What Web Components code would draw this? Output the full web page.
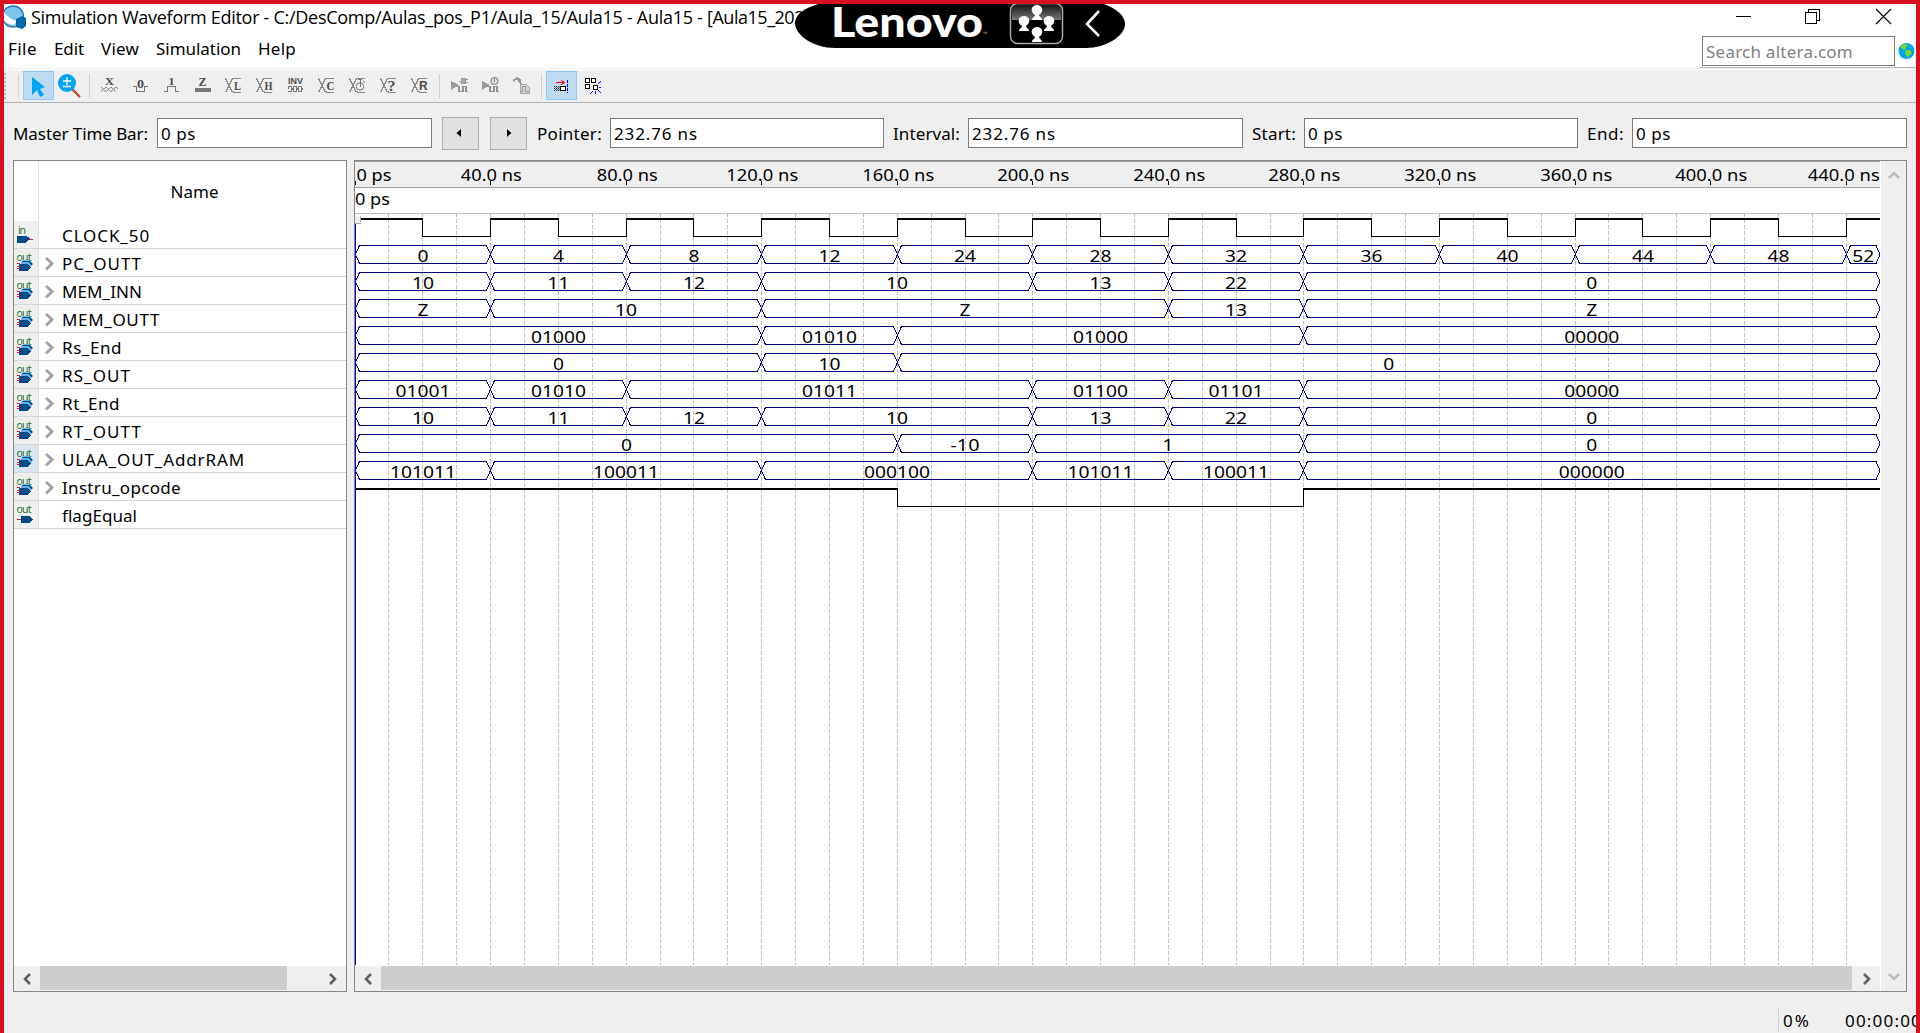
<!DOCTYPE html>
<html lang="en"><head><meta charset="utf-8"><title>Simulation Waveform Editor</title>
<style>html,body{margin:0;height:100%;overflow:hidden;background:#efefef}body{font:17px "Noto Sans","Open Sans",sans-serif;color:#000}</style>
</head><body><app-window></app-window>
<script>
const define=(name,html,setup)=>customElements.define(name,class extends HTMLElement{
  connectedCallback(){if(this.shadowRoot)return;const r=this.attachShadow({mode:'open'});
    r.innerHTML=typeof html==='function'?html(this):html;if(setup)setup(this,r)}});

// Text run tracked out to an exact advance width.
define('fit-text','<style>:host{display:block;white-space:pre;flex:none}span{display:inline-block}</style><span><slot></slot></span>',(el,r)=>{
  const w=+el.getAttribute('w'),s=r.querySelector('span'),n=el.textContent.length;
  const nat=s.getBoundingClientRect().width;
  s.style.letterSpacing=((w-nat)/n)+'px';el.style.width=w+'px';});

define('title-bar',`<style>
:host{display:flex;height:28px;background:#fff;flex:none;font-family:"Open Sans","Noto Sans",sans-serif;font-size:18px;line-height:27px}
svg{flex:none;display:block}.logo{margin:1px 4px 0 0}.grow{flex:1}</style>
<svg class="logo" width="23" height="24" viewBox="0 0 23 24"><circle cx="9" cy="11.5" r="10.500" fill="#7cc6ee" stroke="#2474ae" stroke-width="1.300"/><path d="M-1 6C3 12 8 15 13 16L10 20C4 20 0 17-1 13Z" fill="#fff"/><path d="M12 14l6-3 4 2v8l-4 3-6-2z" fill="#0068a9"/></svg>
<fit-text w="676">Simulation Waveform Editor - C:/DesComp/Aulas_pos_P1/Aula_15/Aula15 - Aula15 - </fit-text><fit-text w="97">[Aula15_202</fit-text><span class="grow"></span>
<svg width="180" height="28" viewBox="1736 4 180 28" fill="none" stroke="#000" shape-rendering="crispEdges"><path d="M1736 16.5h15M1805.5 12.5h11v11h-11zM1808.5 12V9.5h11v11H1817"/><path d="M1876 9l15 15M1891 9l-15 15" shape-rendering="auto" stroke-width="1.1"/></svg>`);

define('menu-bar',`<style>
:host{display:flex;height:36px;background:#fff;flex:none;line-height:34px;border-bottom:1px solid #eee;padding-left:4px}
.items{display:flex;gap:17px}.grow{flex:1}.side{display:flex;width:216px;border-bottom:1px solid #b9b9b9;height:35px;align-items:flex-start}
.box{box-sizing:border-box;width:193px;height:30px;margin:4px 3px 0 2px;border:1px solid #7a7a7a;padding-left:3px;line-height:30px;color:#808080}svg{margin-top:10px}</style>
<div class="items"><fit-text w="29">File</fit-text><fit-text w="30">Edit</fit-text><fit-text w="38">View</fit-text><fit-text w="85">Simulation</fit-text><fit-text w="38">Help</fit-text></div><span class="grow"></span>
<div class="side"><div class="box"><fit-text w="147">Search altera.com</fit-text></div>
<svg width="17" height="18" viewBox="0 0 17 18"><circle cx="8.5" cy="9" r="8" fill="#00a4f4"/><path d="M3 3l4-1 3 1-2 2 0 2-2 1-3-2zM8 8l4 0 2 3-3 3-1 2-2-3-1-2z" fill="#7dd421"/></svg></div>`);

const glyph=(x,y,s,c,w=10)=>`<text x="${x-w/2}" y="${y}" font-family="Liberation Serif" font-size="${s}" font-weight="700" fill="#4c4c4c" textLength="${w}" lengthAdjust="spacingAndGlyphs">${c}</text>`;
const cut='<path d="M.5 1.500L7.500 15.500M7.500 1.500L.5 15.500M7 3l2-1.500h7M7 14l2 1.500h7" fill="none" stroke="#8a8a8a"/>';
const wave='<path d="M5 9.500h3v5h4v-5h3v5h3" fill="none" stroke="#929292" stroke-width="1.700"/>';
const icons={
 x:'<path d="M0 10.500l5 5 5-5 5 5M0 15.500l5-5 5 5 5-5 2 2" transform="scale(1 .95)" fill="none" stroke="#858585"/>'+glyph(8.5,8,10,'X',9),
 zero:'<path d="M1 9.500h3.500v5h8v-5H16" fill="none" stroke="#777"/>'+glyph(8.5,11,12,'0',7),
 one:'<path d="M1 14.500h3.500v-5h8v5H16" fill="none" stroke="#777"/>'+glyph(8.5,8,10,'1',6),
 z:'<path d="M1 11h16v4H1z" fill="#777"/>'+glyph(8.5,9,12,'Z',8),
 l:cut+glyph(12.5,13,12,'L',7), h:cut+glyph(12.5,13,12,'H',8),
 inv:'<text x="1" y="7" font-family="Liberation Sans" font-size="8.500" font-weight="700" fill="#4c4c4c" textLength="15" lengthAdjust="spacingAndGlyphs">INV</text><path d="M1 11.500V9.500h3v2h2v-2h3v2h2v-2h3v2h2M1 14.500h3v-2h2v2h3v-2h2v2h3v-2h2" fill="none" stroke="#777"/>',
 c:cut+glyph(12.5,13,12,'C',8),
 clock:cut+'<circle cx="11" cy="9.500" r="3.700" fill="#efefef" stroke="#777" shape-rendering="auto"/><path d="M9 2.500h4M11 3v7M14 4l2 2" fill="none" stroke="#777"/>',
 q:cut+glyph(11.5,14,14,'?',8),
 r:cut+`<text x="8" y="13" font-family="Liberation Sans" font-size="12" font-weight="700" fill="#4c4c4c" textLength="9">R</text>`,
 run1:'<path d="M0 4l8 4-8 5z" fill="#999"/><path d="M8 4h2c0-4 5-4 5 0s-5 4-5 0M15 2.500h2M15 5.500h2" fill="#aaa" stroke="#999"/>'+wave,
 run2:'<path d="M0 4l8 4-8 5z" fill="#999"/><circle cx="12.500" cy="4" r="3.300" fill="#eee" stroke="#999" stroke-width="1.500" shape-rendering="auto"/><path d="M12.500 2v3" stroke="#777"/>'+wave,
 hammer:'<path d="M0 4l4-3 4 2M5 2l5 8" fill="none" stroke="#999" stroke-width="2"/><path d="M7 7h6l3 3v6H7z" fill="#d5d5d5" stroke="#aaa"/><path d="M7 14h2V9h3v5h4" fill="none" stroke="#999"/>',
 snap:'<path d="M3 5.500h8M8 3l3 2.500L8 8" fill="none" stroke="#f00"/><path d="M1 9.500h7M1 13.500h7M1 11.500h7" stroke="#222" stroke-dasharray="1 1"/><path d="M1 10.500h7M1 12.500h7" stroke="#555" stroke-dasharray="1 1" stroke-dashoffset="1"/><path d="M7.500 9.500h5v4h-5z" fill="#fff" stroke="#000"/><path d="M14.500 3v13" stroke="#00f" stroke-dasharray="3 1"/>',
 grid:'<path d="M1.500 1.500h4v4h-4zM7.500 1.500h4v4h-4zM1.500 7.500h4v4h-4zM9.500 8.500h4v4h-4z" fill="#fff" stroke="#000"/><path d="M14 7l3-3M15 10.500h2M14 13l3 3M11.500 14v3M9 14l-3 3" stroke="#00f"/>'};
define('tool-icon',el=>`<style>:host{display:flex;box-sizing:border-box;width:31px;height:29px;align-items:center;justify-content:center;flex:none}
:host([on]){background:#bfdbf2;border:1px solid #90c8f6}svg{display:block}</style><svg width="17" height="17" viewBox="0 0 17 17" shape-rendering="crispEdges">${icons[el.getAttribute('kind')]}</svg>`);
define('tool-bar',()=>`<style>:host{display:flex;flex:none;background:#efefef;border-top:1px solid #fff;border-bottom:1px solid #b3b3b3;box-sizing:border-box;height:34px}
i{display:block;width:1px;height:24px;background:#cfcfcf;margin-top:4px;flex:none}.grip{height:26px;width:2px;margin-top:3px;background:repeating-linear-gradient(#b8b8b8 0 2px,#efefef 2px 4px)}
.sel{display:flex;box-sizing:border-box;width:31px;height:29px;border:1px solid #90c8f6;background:#bfdbf2;margin:1px 4px 0}
svg{flex:none}tool-icon{margin-top:1px}</style>
<i class="grip"></i><i style="margin-left:12px"></i><div class="sel"><svg width="29" height="27" viewBox="24 72 29 27"><path d="M32 77L45 87L40 89L44 95L40 97L37 90L32 95Z" fill="#00a4f4"/></svg></div>
<svg width="26" height="31" viewBox="58 70 26 31"><path d="M72 89l8 8" stroke="#c43b18" stroke-width="2.200"/><circle cx="67" cy="83" r="9" fill="#00a4f4"/><path d="M67 77v8M63 81h8M63 86.500h8" stroke="#fff" stroke-width="1.300"/></svg>
<i style="margin:4px 4px 0 5px"></i>${['x','zero','one','z','l','h','inv','c','clock','q','r'].map(k=>`<tool-icon kind="${k}"></tool-icon>`).join('')}
<i style="margin:4px 4px 0 4px"></i>${['run1','run2','hammer'].map(k=>`<tool-icon kind="${k}"></tool-icon>`).join('')}<i style="margin:4px 4px 0 4px"></i><tool-icon on kind="snap"></tool-icon><tool-icon kind="grid"></tool-icon>`);

define('time-field',el=>`<style>:host{display:flex;align-items:center;flex:none}.box{box-sizing:border-box;height:30px;line-height:30px;border:1px solid #7a7a7a;background:#fff;padding-left:3px;width:${el.getAttribute('bw')}px}
.l{width:${el.getAttribute('lw')}px;line-height:29px;flex:none}</style><div class="l"><fit-text w="${el.getAttribute('tw')}">${el.getAttribute('label')}</fit-text></div><div class="box"><fit-text w="${el.getAttribute('vw')}">${el.getAttribute('value')}</fit-text></div>`);
define('step-button',el=>`<style>:host{display:flex;box-sizing:border-box;width:37px;height:33px;border:1px solid #adadad;background:#e1e1e1;align-items:center;justify-content:center;flex:none}</style>
<svg width="35" height="31" viewBox="0 0 35 31"><path d="${el.hasAttribute('next')?'M16 11l4.500 4L16 19z':'M18 11l-4.500 4L18 19z'}"/></svg>`);
define('time-bar',`<style>:host{display:flex;height:57px;flex:none;align-items:flex-start;padding:14px 0 0 9px;box-sizing:border-box}time-field{margin-top:1px}step-button{margin-left:10px}step-button+step-button{margin-left:11px}</style>
<time-field label="Master Time Bar:" lw="144" tw="135" bw="275" value="0 ps" vw="35"></time-field><step-button></step-button><step-button next></step-button>
<time-field style="margin-left:10px" label="Pointer:" lw="73" tw="65" bw="274" value="232.76 ns" vw="84"></time-field>
<time-field style="margin-left:9px" label="Interval:" lw="75" tw="67" bw="275" value="232.76 ns" vw="84"></time-field>
<time-field style="margin-left:9px" label="Start:" lw="52" tw="44" bw="274" value="0 ps" vw="35"></time-field>
<time-field style="margin-left:9px" label="End:" lw="45" tw="37" bw="275" value="0 ps" vw="35"></time-field>`);

const pinOut='<text x="-.500" y="7" font-size="10.500" textLength="15" fill="#2a7030">out</text>';
const pins={in:'<text x="1" y="8" font-size="10.500" fill="#2a7030" textLength="8">in</text><path d="M0 9.500h9l4 3-4 4H0z" fill="#004a87"/><path d="M12 13h4" stroke="#e8102e"/>',
 bus:pinOut+'<path d="M4 8l3-2h5l4 4-3 5-2-5H4z" fill="#5fb4ec"/><path d="M5 7.500h7l3 3" fill="none" stroke="#004a87"/><path d="M2 10h8l4 3-3 4H2z" fill="#004a87"/><path d="M0 9.500h3M0 12h3M0 14.500h3" stroke="#e8102e"/>',
 out:pinOut+'<path d="M4 10h8l4 3-4 4H4z" fill="#004a87"/><path d="M0 13.500h4" stroke="#e8102e"/>'};
define('signal-row',el=>`<style>:host{display:flex;height:28px;box-sizing:border-box;border-bottom:1px solid #d4d4d4;flex:none}.pin{background:#efefef;border-right:1px solid #ddd;padding:5px 0 0 3px;box-sizing:border-box;width:25px}:host([active]) .pin{background:#d9e5f0}
.ch{width:23px;padding:8px 0 0 6px;box-sizing:border-box}svg{display:block;overflow:visible}.n{line-height:29px}</style>
<div class="pin"><svg width="17" height="18" shape-rendering="crispEdges">${pins[el.getAttribute('pin')]}</svg></div><div class="ch">${el.getAttribute('pin')==='bus'?'<svg width="10" height="14"><path d="M1 1l6 5.500L1 12.500" fill="none" stroke="#a3a3a3" stroke-width="3"/></svg>':''}</div><div class="n"><slot></slot></div>`);
const chev=(d)=>`<svg width="12" height="12" viewBox="0 0 12 12"><path d="${{l:'M9 1L4 6l5 5',r:'M3 1l5 5-5 5',u:'M1 9l5-5 5 5',d:'M1 3l5 5 5-5'}[d]}" fill="none" stroke="${d==='u'||d==='d'?'#bdbdbd':'#606060'}" stroke-width="2.600"/></svg>`;
define('scroll-bar',el=>{const v=el.hasAttribute('vertical');return `<style>:host{display:flex;flex:none;background:#efefef;${v?'flex-direction:column;width:25px;justify-content:space-between;align-items:center;padding:8px 0':'height:25px'};box-sizing:border-box}
span{width:26px;height:25px;display:flex;align-items:center;justify-content:center;flex:none}b{width:${el.getAttribute('thumb')}px;height:24px;background:#cdcdcd}.g{flex:1}svg{display:block}</style>${v?chev('u')+chev('d'):`<span>${chev('l')}</span><b></b><div class="g"></div><span style="width:27px">${chev('r')}</span>`}`});
define('signal-list',()=>{const rows=[['CLOCK_50',88,'in'],['PC_OUTT',80],['MEM_INN',80],['MEM_OUTT',98],['Rs_End',60],['RS_OUT',69],['Rt_End',58],['RT_OUTT',80],['ULAA_OUT_AddrRAM',183],['Instru_opcode',119],['flagEqual',75,'out']];
return `<style>:host{display:flex;flex-direction:column;box-sizing:border-box;width:334px;border:1px solid #828790;background:#fff;flex:none}
.head{display:flex;height:60px;flex:none}.a{width:24px;border-right:1px solid #e6e6e6}.name{flex:1;display:flex;justify-content:center;line-height:61px;padding-left:4px}.g{flex:1}</style>
<div class="head"><div class="a"></div><div class="name"><fit-text w="48">Name</fit-text></div></div>
${rows.map(r=>`<signal-row pin="${r[2]||'bus'}"${r[0][0]==='U'?' active':''}><fit-text w="${r[1]}">${r[0]}</fit-text></signal-row>`).join('')}<div class="g"></div><scroll-bar thumb="247"></scroll-bar>`});

define('wave-view',()=>{
 const X=k=>Math.floor(355+33.89*k)+.5, END=1880;
 let s='<rect x="355" y="161" width="1525" height="26" fill="#efefef"/><path d="M355 161.500h1525M355 187.500h1525" stroke="#a0a0a0"/><path d="M355 213.500h1525" stroke="#bdbdbd"/>',t='';
 const text=(x,y,w,str,a='middle')=>t+=`<text x="${a==='middle'?x-w/2:x}" y="${y}" textLength="${w}" lengthAdjust="spacingAndGlyphs">${str}</text>`;
 for(let k=1;k<=44;k++)s+=`<path d="M${X(k)} 214V965" stroke="#bebebe" stroke-dasharray="4 2" stroke-dashoffset="1"/>`;
 for(let k=0;k<=44;k+=4)s+=`<path d="M${X(k)} 181v4" stroke="#000"/>`;
 text(356.5,181,35,'0 ps','start');text(355,205,35,'0 ps','start');
 for(let n=40;n<=440;n+=40){const w=n<100?61:72;text(n===440?1843.8:X(n/10)+.8,181,w,n+'.0 ns')}
 for(let k=0;k<=44;k+=4){const a=k?X(k):360,b=k<44?X(k+2):END;
  s+=`<path d="M${k?a-.5:a} 219H${b+(k<44?.5:0)}" stroke="#000" stroke-width="2"/>`;
  if(k<44)s+=`<path d="M${b} 218V236.500H${X(k+4)}V218" fill="none" stroke="#000"/>`;}
 const rows=[
  [[0,'0'],[4,'4'],[8,'8'],[12,'12'],[16,'24'],[20,'28'],[24,'32'],[28,'36'],[32,'40'],[36,'44'],[40,'48'],[44,'52']],
  [[0,'10'],[4,'11'],[8,'12'],[12,'10'],[20,'13'],[24,'22'],[28,'0']],
  [[0,'Z'],[4,'10'],[12,'Z'],[24,'13'],[28,'Z']],
  [[0,'01000'],[12,'01010'],[16,'01000'],[28,'00000']],
  [[0,'0'],[12,'10'],[16,'0']],
  [[0,'01001'],[4,'01010'],[8,'01011'],[20,'01100'],[24,'01101'],[28,'00000']],
  [[0,'10'],[4,'11'],[8,'12'],[12,'10'],[20,'13'],[24,'22'],[28,'0']],
  [[0,'0'],[16,'-10'],[20,'1'],[28,'0']],
  [[0,'101011'],[4,'100011'],[12,'000100'],[20,'101011'],[24,'100011'],[28,'000000']]];
 rows.forEach((r,i)=>{const y=245.5+27*i,b=y+18,m=y+9;
  r.forEach(([k,v],j)=>{const x=X(k),last=j===r.length-1,e=last?END:X(r[j+1][0]);
   s+=`<path d="M${x} ${m}L${x+4} ${y}H${e-4}L${e} ${m}L${e-4} ${b}H${x+4}Z" fill="none" stroke="#00007c"/>`;
   text((x+e)/2,b-1.5,v==='-10'?29:v.length*11,v)})});
 s+=`<path d="M355 489H${X(16)+.5}M${X(28)-.5} 489H1880" stroke="#000" stroke-width="2"/><path d="M${X(16)} 489V506.500H${X(28)}V489" fill="none" stroke="#000"/>
 <path d="M355.500 222V965" stroke="#0000c8"/><path d="M355 216h5v7h-5z" fill="#eee"/><path d="M360.500 216v7.500H355" fill="none" stroke="#aaa"/>`;
 return `<style>:host{display:flex;box-sizing:border-box;width:1553px;border:1px solid #828790;background:#fff;flex:none}.m{width:1525px;margin-right:1px;display:flex;flex-direction:column;flex:none}.m>svg{display:block;flex:none}scroll-bar[vertical]{flex:1}</style>
 <div class="m"><svg width="1525" height="805" viewBox="355 161 1525 805" font-family="Noto Sans,Open Sans,sans-serif" font-size="17"><g shape-rendering="crispEdges">${s}</g>${t}</svg><scroll-bar thumb="1471"></scroll-bar></div><scroll-bar vertical></scroll-bar>`});

define('status-bar',`<style>:host{display:flex;height:41px;flex:none;justify-content:flex-end;overflow:hidden;line-height:57px}i{width:1px;height:25px;background:#d0d0d0;margin:15px 4px 0 0;flex:none}div{display:flex;width:138px;flex:none;overflow:hidden}fit-text+fit-text{margin-left:34px}</style>
<div><i></i><fit-text w="28">0%</fit-text><fit-text w="77">00:00:00</fit-text></div>`);

const pawn=(x,y)=>`<path d="M${x-5} ${y+9}c0-3 3-3 3-5-6-4-3-10 2-10s8 6 2 10c0 2 3 2 3 5z" fill="#fff"/>`;
define('lenovo-tab',`<style>:host{display:block;position:absolute;left:795px;top:0;width:331px;height:49px}svg{display:block}</style>
<svg width="331" height="49" viewBox="795 0 331 49"><defs><linearGradient id="g" x2="0" y2="1"><stop stop-color="#111"/><stop offset="1" stop-color="#777"/></linearGradient></defs>
<path d="M826 2H1096C1112 5 1125 14 1125 24C1125 36 1106 48 1086 48H835C813 48 795 35 795 23C795 13 808 6 826 2Z"/>
<text x="831" y="36.500" font-family="Lato,Noto Sans,sans-serif" font-size="41" font-weight="900" fill="#fff" textLength="152" lengthAdjust="spacingAndGlyphs">Lenovo</text><text x="983" y="36" font-family="Noto Sans" font-size="6" fill="#999" textLength="8">™</text>
<path d="M1012 20V10q0-6 6-6h37q6 0 6 6v10z" fill="url(#g)"/><rect x="1010.500" y="3.500" width="52" height="40" rx="7" fill="none" stroke="#aaa" stroke-width="1.500"/>
${pawn(1037,11)+pawn(1024,22)+pawn(1049,22)+pawn(1037,33)}<path d="M1099 11L1087 24L1099 36" fill="none" stroke="#fff" stroke-width="2.600"/></svg>`);
define('app-window',`<style>:host{display:flex;flex-direction:column;box-sizing:border-box;width:1920px;height:1033px;border:4px solid #da1020;border-bottom:0;background:#efefef;overflow:hidden;position:relative}
.panes{display:flex;height:832px;gap:7px;padding-left:9px;flex:none}.strip{position:absolute;left:774px;top:-4px;width:362px;height:2px;background:linear-gradient(90deg,#ec005c 72px,#e5e5e5 72px)}lenovo-tab{left:791px;top:-4px}</style>
<title-bar></title-bar><menu-bar></menu-bar><tool-bar></tool-bar><time-bar></time-bar><div class="panes"><signal-list></signal-list><wave-view></wave-view></div><status-bar></status-bar><div class="strip"></div><lenovo-tab></lenovo-tab>`);
</script></body></html>
